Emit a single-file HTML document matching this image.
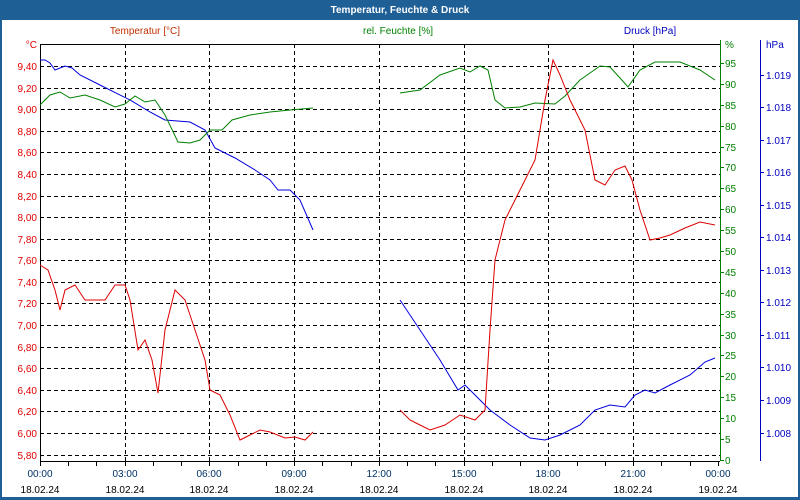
<!DOCTYPE html>
<html><head><meta charset="utf-8"><style>
html,body{margin:0;padding:0;background:#fff}
svg{display:block}
text{font-family:"Liberation Sans",sans-serif;font-size:10px}
</style></head><body>
<svg width="800" height="500" xmlns="http://www.w3.org/2000/svg">
<rect x="0" y="0" width="800" height="500" fill="#1e5f96"/>
<rect x="2" y="20" width="796" height="477" fill="#fff"/>
<text x="400" y="13" text-anchor="middle" fill="#fff" font-weight="bold" style="font-size:10px">Temperatur, Feuchte &amp; Druck</text>
<g stroke="#000" stroke-dasharray="4,3" stroke-width="1">
<path d="M40 44.5H720M40 66.5H720M40 88.5H720M40 109.5H720M40 131.5H720M40 152.5H720M40 174.5H720M40 196.5H720M40 217.5H720M40 239.5H720M40 260.5H720M40 282.5H720M40 303.5H720M40 325.5H720M40 347.5H720M40 368.5H720M40 390.5H720M40 411.5H720M40 433.5H720M40 455.5H720"/>
<path d="M125.5 44V461M209.5 44V461M294.5 44V461M379.5 44V461M464.5 44V461M548.5 44V461M633.5 44V461"/>
</g>
<path d="M40.5 44V461.5H720" stroke="#000" fill="none"/>
<path d="M40 44.5H720" stroke="#000"/>
<g stroke="#000"><path d="M40.5 461V466M68.5 461V466M96.5 461V466M125.5 461V466M153.5 461V466M181.5 461V466M209.5 461V466M238.5 461V466M266.5 461V466M294.5 461V466M322.5 461V466M351.5 461V466M379.5 461V466M407.5 461V466M435.5 461V466M464.5 461V466M492.5 461V466M520.5 461V466M548.5 461V466M577.5 461V466M605.5 461V466M633.5 461V466M661.5 461V466M690.5 461V466M718.5 461V466"/></g>
<path d="M720.5 40V461" stroke="#008000"/>
<g stroke="#008000"><path d="M720 63.5h4M720 84.5h4M720 105.5h4M720 126.5h4M720 147.5h4M720 167.5h4M720 188.5h4M720 209.5h4M720 230.5h4M720 251.5h4M720 272.5h4M720 293.5h4M720 314.5h4M720 335.5h4M720 355.5h4M720 376.5h4M720 397.5h4M720 418.5h4M720 439.5h4M720 460.5h4"/></g>
<path d="M760.5 40V461" stroke="#0000c0"/>
<g stroke="#0000c0"><path d="M760 75.5h4M760 107.5h4M760 140.5h4M760 172.5h4M760 205.5h4M760 237.5h4M760 270.5h4M760 302.5h4M760 335.5h4M760 367.5h4M760 400.5h4M760 433.5h4"/></g>
<text x="145" y="34" text-anchor="middle" fill="#c03000">Temperatur [°C]</text>
<text x="398" y="34" text-anchor="middle" fill="#008000">rel. Feuchte [%]</text>
<text x="650" y="34" text-anchor="middle" fill="#0000c0">Druck [hPa]</text>
<g fill="#e00000" text-anchor="end">
<text x="37" y="48">°C</text>
<text x="37" y="70">9,40</text><text x="37" y="92">9,20</text><text x="37" y="113">9,00</text><text x="37" y="135">8,80</text><text x="37" y="156">8,60</text><text x="37" y="178">8,40</text><text x="37" y="200">8,20</text><text x="37" y="221">8,00</text><text x="37" y="243">7,80</text><text x="37" y="264">7,60</text><text x="37" y="286">7,40</text><text x="37" y="307">7,20</text><text x="37" y="329">7,00</text><text x="37" y="351">6,80</text><text x="37" y="372">6,60</text><text x="37" y="394">6,40</text><text x="37" y="415">6,20</text><text x="37" y="437">6,00</text><text x="37" y="459">5,80</text>
</g>
<g fill="#008000">
<text x="725" y="48">%</text>
<text x="725" y="67">95</text><text x="725" y="88">90</text><text x="725" y="109">85</text><text x="725" y="130">80</text><text x="725" y="151">75</text><text x="725" y="171">70</text><text x="725" y="192">65</text><text x="725" y="213">60</text><text x="725" y="234">55</text><text x="725" y="255">50</text><text x="725" y="276">45</text><text x="725" y="297">40</text><text x="725" y="318">35</text><text x="725" y="339">30</text><text x="725" y="359">25</text><text x="725" y="380">20</text><text x="725" y="401">15</text><text x="725" y="422">10</text><text x="725" y="443">5</text><text x="725" y="464">0</text>
</g>
<g fill="#0000c0">
<text x="766" y="48">hPa</text>
<text x="766" y="79">1.019</text><text x="766" y="111">1.018</text><text x="766" y="144">1.017</text><text x="766" y="176">1.016</text><text x="766" y="209">1.015</text><text x="766" y="241">1.014</text><text x="766" y="274">1.013</text><text x="766" y="306">1.012</text><text x="766" y="339">1.011</text><text x="766" y="371">1.010</text><text x="766" y="404">1.009</text><text x="766" y="437">1.008</text>
</g>
<g fill="#003366" text-anchor="middle">
<text x="40" y="477">00:00</text><text x="125" y="477">03:00</text><text x="209" y="477">06:00</text><text x="294" y="477">09:00</text><text x="379" y="477">12:00</text><text x="464" y="477">15:00</text><text x="548" y="477">18:00</text><text x="633" y="477">21:00</text><text x="718" y="477">00:00</text>
</g>
<g fill="#000" text-anchor="middle">
<text x="40" y="493">18.02.24</text><text x="125" y="493">18.02.24</text><text x="209" y="493">18.02.24</text><text x="294" y="493">18.02.24</text><text x="379" y="493">18.02.24</text><text x="464" y="493">18.02.24</text><text x="548" y="493">18.02.24</text><text x="633" y="493">18.02.24</text><text x="718" y="493">19.02.24</text>
</g>
<g fill="none" stroke-width="1">
<polyline stroke="#0000dd" points="40,60 45,60 50,63 55,70 65,66 72,68 80,75 100,85 130,100 150,112 165,120 190,122 205,130 215,148 235,158 255,170 270,180 278,190 290,190 300,200 313,230"/>
<polyline stroke="#0000dd" points="400,300 420,330 440,360 458,390 465,385 475,395 490,410 510,425 530,438 545,440 560,435 580,425 595,410 610,405 625,407 635,395 645,390 655,393 670,385 690,375 705,362 715,358"/>
<polyline stroke="#008000" points="40,105 50,95 60,92 70,98 85,95 100,100 115,107 125,104 135,96 145,102 155,100 165,115 178,142 190,143 200,140 210,130 222,130 232,120 250,115 270,112 290,110 313,108"/>
<polyline stroke="#008000" points="400,93 420,90 440,75 460,68 470,72 480,66 488,70 495,100 505,108 520,107 535,103 555,104 565,96 580,80 600,66 610,67 620,78 628,87 640,70 655,62 680,62 700,70 715,80"/>
<polyline stroke="#dd0000" points="40,265 48,270 55,290 60,310 65,290 75,285 85,300 95,300 105,300 115,285 125,285 130,300 138,350 145,340 152,360 158,393 165,330 175,290 185,300 195,330 205,360 210,390 220,395 230,415 240,440 250,435 260,430 270,432 285,438 295,437 305,440 313,432"/>
<polyline stroke="#dd0000" points="400,410 410,420 420,425 430,430 445,425 460,415 475,420 485,410 490,330 495,260 505,220 515,200 525,180 535,160 545,100 553,60 560,75 570,100 585,130 595,180 605,185 615,170 625,166 632,180 640,210 650,240 660,238 670,235 685,228 700,222 715,225"/>
</g>
</svg>
</body></html>
